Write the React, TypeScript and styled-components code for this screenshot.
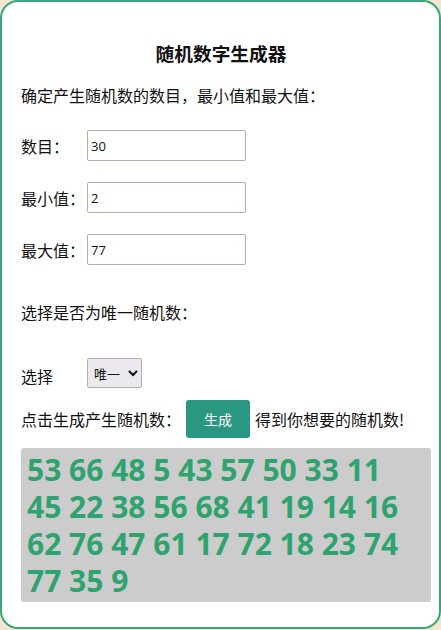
import styled, { createGlobalStyle } from "styled-components";

const GlobalStyle = createGlobalStyle`
  html, body {
    margin: 0;
    padding: 0;
    background: #f4e4d2;
  }
  body {
    font-family: "Noto Sans CJK SC", "Noto Sans", sans-serif;
    color: #111;
  }
`;

const numbers = [
  53, 66, 48, 5, 43, 57, 50, 33, 11, 45, 22, 38, 56, 68, 41, 19, 14, 16, 62,
  76, 47, 61, 17, 72, 18, 23, 74, 77, 35, 9,
];

const App = () => {
  return (
    <>
      <GlobalStyle />
      <Card>
        <Title>随机数字生成器</Title>
        <Text>确定产生随机数的数目，最小值和最大值：</Text>
        <FieldRow>
          <Label>数目：</Label>
          <Input defaultValue="30" />
        </FieldRow>
        <FieldRow>
          <Label>最小值：</Label>
          <Input defaultValue="2" />
        </FieldRow>
        <FieldRow>
          <Label>最大值：</Label>
          <Input defaultValue="77" />
        </FieldRow>
        <Section>选择是否为唯一随机数：</Section>
        <SelectRow>
          <Label>选择</Label>
          <Select defaultValue="unique">
            <option value="unique">唯一</option>
            <option value="repeat">可重复</option>
          </Select>
        </SelectRow>
        <ActionRow>
          <span>点击生成产生随机数：</span>
          <GenerateButton>生成</GenerateButton>
          <span>得到你想要的随机数!</span>
        </ActionRow>
        <Result>{numbers.join(" ")}</Result>
      </Card>
    </>
  );
};

export default App;

const Card = styled.div`
  box-sizing: border-box;
  width: 441px;
  min-height: 629px;
  background: #fff;
  border: 2px solid #3aa876;
  border-radius: 18px;
  padding: 30px 8px 0 19px;
`;

const Title = styled.h3`
  margin: 0;
  text-align: center;
  font-size: 18.7px;
  font-weight: bold;
  line-height: 42px;
  padding-right: 10px;
`;

const Text = styled.p`
  margin: 0;
  font-size: 16px;
  line-height: 42px;
`;

const FieldRow = styled.div`
  display: flex;
  align-items: center;
  height: 31px;
  margin-top: 21px;
  font-size: 16px;

  &:first-of-type {
    margin-top: 14px;
  }
`;

const Label = styled.span`
  width: 66px;
  flex: none;
`;

const Input = styled.input`
  box-sizing: border-box;
  width: 159px;
  height: 31px;
  border: 1px solid #bcaca0;
  border-radius: 2px;
  padding: 0 3px;
  font-family: "Open Sans", "Noto Sans", sans-serif;
  font-size: 13px;
  color: #111;
  outline: none;
`;

const Section = styled.p`
  margin: 36px 0 0 0;
  font-size: 16px;
  line-height: 22px;
`;

const SelectRow = styled.div`
  display: flex;
  align-items: center;
  margin-top: 35px;
  font-size: 16px;
  height: 30px;

  span {
    margin-top: 6px;
  }
`;

const Select = styled.select`
  box-sizing: border-box;
  width: 55px;
  height: 30px;
  border: 1px solid #b8aea6;
  border-radius: 2px;
  background: #ebe9ed;
  font-family: "Noto Sans CJK SC", sans-serif;
  font-size: 13px;
  color: #111;
  padding: 0 2px;
`;

const ActionRow = styled.div`
  display: flex;
  align-items: center;
  margin-top: 12px;
  font-size: 16px;
  gap: 5px;
`;

const GenerateButton = styled.button`
  width: 64px;
  height: 38px;
  border: none;
  border-radius: 3px;
  background: #2a9783;
  color: #fff;
  font-family: "Noto Sans CJK SC", sans-serif;
  font-size: 14px;
  cursor: pointer;
`;

const Result = styled.div`
  box-sizing: border-box;
  width: 410px;
  min-height: 154px;
  margin-top: 10px;
  padding: 3px 12px 3px 6px;
  background: #cccccc;
  border-radius: 3px;
  color: #2fa36f;
  font-family: "Open Sans", "Noto Sans", sans-serif;
  font-weight: bold;
  font-size: 30px;
  line-height: 37px;
`;
